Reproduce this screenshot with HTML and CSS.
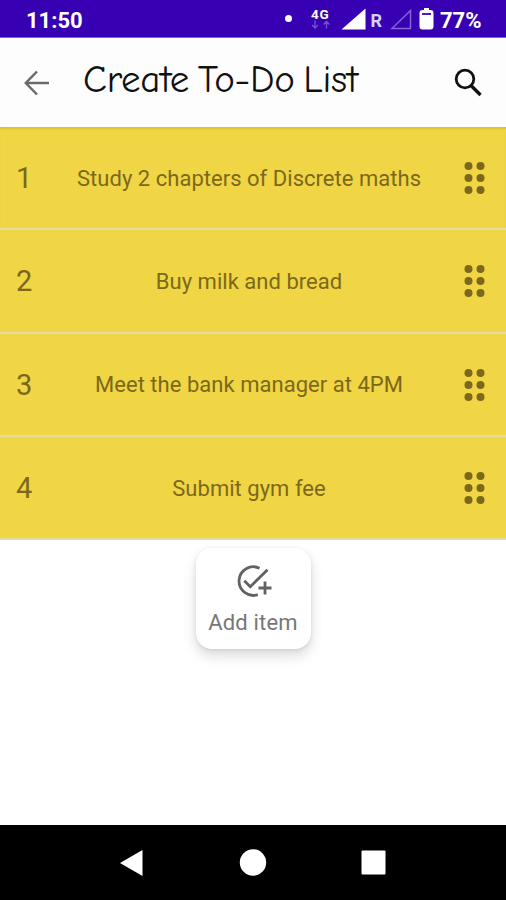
FILE: index.html
```html
<!DOCTYPE html>
<html lang="en">
<head>
<meta charset="utf-8">
<title>Create To-Do List</title>
<link rel="stylesheet" href="styles.css">
</head>
<body>
<div class="screen">
  <div class="status">
    <span class="clock">11:50</span>
    <svg class="signals" width="160" height="38" viewBox="0 0 160 38">
      <circle cx="13.500" cy="18.500" r="3.500" fill="#fff"/>
      <text class="net" x="36" y="18.500">4G</text>
      <path d="M40 20.500v7M37 25l3 3 3-3M51.500 28.500v-7M48.500 24.500l3-3 3 3" fill="none" stroke="#7550cc" stroke-width="1.400"/>
      <path d="M66.500 29.500L90.500 8.500v21z" fill="#fff"/>
      <text class="roam" x="95.500" y="27">R</text>
      <path d="M117 28.500L135.500 10.500v18z" fill="none" stroke="#8564d4" stroke-width="1.500"/>
      <path d="M149 8h5v2h1.500q3 0 3 3v13.500q0 3-3 3h-8q-3 0-3-3v-13.500q0-3 3-3h1.500z" fill="#fff"/>
      <path d="M147 14h9" stroke="#3700b3" stroke-width="1.800"/>
    </svg>
    <span class="percent">77%</span>
  </div>
  <header class="bar">
    <svg class="back" width="26" height="26" viewBox="0 0 26 26"><path d="M25 13H2M13 1.500L1.800 13 13 24.500" fill="none" stroke="#6b6b6b" stroke-width="2.500"/></svg>
    <h1 class="title">Create To-Do List</h1>
    <svg class="search" width="30" height="30" viewBox="0 0 30 30"><circle cx="12" cy="11" r="8.800" fill="none" stroke="#111" stroke-width="2.800"/><path d="M18.500 18l9 9" stroke="#111" stroke-width="3.400"/></svg>
  </header>
  <main class="content">
    <div class="row"><span class="num">1</span><span class="task">Study 2 chapters of Discrete maths</span><svg class="grip" width="22" height="34"><use href="#dots"/></svg></div>
    <div class="row"><span class="num">2</span><span class="task">Buy milk and bread</span><svg class="grip" width="22" height="34"><use href="#dots"/></svg></div>
    <div class="row"><span class="num">3</span><span class="task">Meet the bank manager at 4PM</span><svg class="grip" width="22" height="34"><use href="#dots"/></svg></div>
    <div class="row"><span class="num">4</span><span class="task">Submit gym fee</span><svg class="grip" width="22" height="34"><use href="#dots"/></svg></div>
    <button class="add">
      <svg width="38" height="34" viewBox="0 0 38 34" fill="none" stroke="#626262" stroke-width="2.800"><path d="M25.500 4.200A14.300 14.300 0 1 0 23.800 30.700M10.300 16.700l6 6L33.500 5.700M31 17.500v13M24.500 24h13"/></svg>
      <span class="add-label">Add item</span>
    </button>
  </main>
  <nav class="nav">
    <svg width="26" height="28" viewBox="0 0 26 28"><path d="M1 14L23.500 1v26z" fill="#fff"/></svg>
    <svg width="28" height="28" viewBox="0 0 28 28"><circle cx="14" cy="13.500" r="13.200" fill="#fff"/></svg>
    <svg width="26" height="26" viewBox="0 0 26 26"><rect x="1.500" y=".5" width="24" height="24" rx="1" fill="#fff"/></svg>
  </nav>
</div>
<svg class="defs" width="0" height="0"><defs><g id="dots" fill="#7c681b"><circle cx="4.500" cy="5" r="4"/><circle cx="16.500" cy="5" r="4"/><circle cx="4.500" cy="17" r="4"/><circle cx="16.500" cy="17" r="4"/><circle cx="4.500" cy="29" r="4"/><circle cx="16.500" cy="29" r="4"/></g></defs></svg>
</body>
</html>
```
FILE: styles.css
```css
* { box-sizing: border-box; }
body { margin: 0; font-family: Roboto, "Liberation Sans", sans-serif; overflow: hidden; }
svg { display: block; flex: none; }
.defs { position: absolute; }
.screen { width: 506px; height: 900px; display: flex; flex-direction: column; background: #fff; }
.status { height: 38px; background: #3700b3; color: #fff; display: flex; align-items: center; padding: 3px 21px 0 26px; border-bottom: 1px solid #7961d2; font-size: 22px; font-weight: 700; flex: none; }
.clock { flex: 1; }
.signals { margin-top: -3px; }
.net { font-size: 13.500px; font-weight: 700; fill: #fff; letter-spacing: .8px; }
.roam { font-size: 18px; font-weight: 700; fill: #d9d0f5; }
.percent { width: 45px; font-size: 22px; margin-left: 5px; white-space: nowrap; }
.bar { height: 89px; background: #fdfdfd; display: flex; align-items: center; padding: 0 23px 0 24px; flex: none; }
.back { margin-right: 33px; }
.title { flex: 1; margin: -6px 0 0; font-family: "Comic Neue", "Patrick Hand", Lato, sans-serif; font-weight: 400; font-size: 39px; line-height: 44px; letter-spacing: -.3px; word-spacing: -4px; color: #111; white-space: nowrap; }
.content { flex: 1; display: flex; flex-direction: column; align-items: center; }
.row { width: 100%; height: 103.300px; flex: none; display: flex; align-items: center; background: #f0d544; border-bottom: 2px solid #e3dca9; padding: 1px 20px 0 16px; color: #7c681b; }
.row:first-child { box-shadow: inset 0 3px 2px -1px #d9c22f; }
.num { width: 36px; font-size: 29px; }
.task { flex: 1; padding-right: 18px; text-align: center; font-size: 22px; letter-spacing: .03px; white-space: nowrap; }
.add { width: 115px; height: 101px; margin-top: 8px; padding: 16px 0 0; border: 0; border-radius: 16px; background: #fff; box-shadow: 0 7px 13px rgba(0,0,0,.14), 0 1px 4px rgba(0,0,0,.09); display: flex; flex-direction: column; align-items: center; font-family: inherit; color: #777; }
.add-label { margin-top: 11px; font-size: 22px; line-height: 28px; letter-spacing: .2px; white-space: nowrap; }
.nav { height: 75px; flex: none; background: #000; display: flex; align-items: center; justify-content: space-between; padding: 0 120px 0 119px; }
```
